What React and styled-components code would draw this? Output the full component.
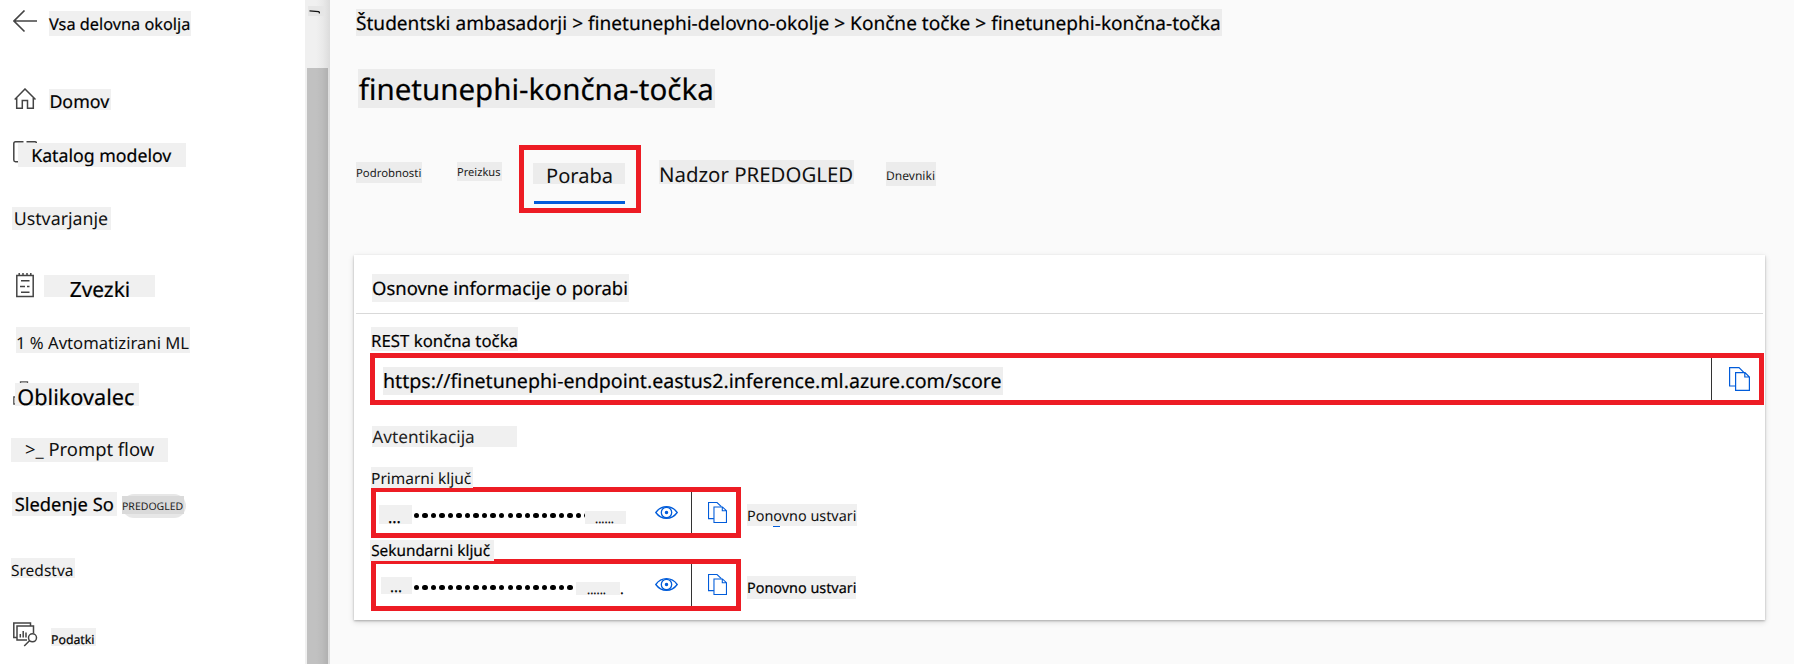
import React from "react";
import styled, { createGlobalStyle } from "styled-components";

const GlobalStyle = createGlobalStyle`
  * { box-sizing: border-box; }
  body {
    margin: 0;
    background: #fafafa;
    color: #000;
    font-family: "Noto Sans", "Open Sans", sans-serif;
    overflow: hidden;
  }
`;

const RED = "#ed1c24";
const BLUE = "#015cda";

const Page = styled.div`
  display: flex;
  width: 1794px;
  height: 664px;
  overflow: hidden;
`;

const Sidebar = styled.nav`
  flex: none;
  width: 305px;
  padding-top: 10px;
  background: #fff;
`;

const NavRow = styled.div`
  display: flex;
  align-items: flex-start;
  height: ${(p) => p.$h}px;
  padding-left: ${(p) => p.$indent}px;
  svg { flex: none; display: block; }
`;

/* The line height is derived so that the text's baseline sits $base px below the chip's top. */
const Chip = styled.span`
  flex: none;
  display: block;
  position: relative;
  width: ${(p) => p.$w}px;
  height: ${(p) => p.$h}px;
  margin: ${(p) => p.$top || 0}px 0 ${(p) => p.$bottom || 0}px ${(p) => p.$left || 0}px;
  padding-left: ${(p) => p.$pad || 0}px;
  background: ${(p) => p.$bg || "#f0f0f0"};
  color: ${(p) => p.$color || "#000"};
  font-size: ${(p) => p.$size}px;
  font-weight: 400;
  -webkit-text-stroke: ${(p) => (p.$color ? 0 : 0.2)}px;
  line-height: ${(p) => 2 * (p.$base + 1 - 0.388 * p.$size)}px;
  text-rendering: geometricPrecision;
  white-space: nowrap;
`;

const PreviewPill = styled.span`
  width: 64px;
  height: 24px;
  margin: 2px 0 0 5px;
  padding-top: 2px;
  border-radius: 12px;
  background: #e7e7e7;
`;

const ScrollTrack = styled.div`
  flex: none;
  width: 25px;
  padding: 6px 2px 0;
  background: linear-gradient(90deg, #f0f0f0 0 11px, #e9e9e9 18px, #dcdcdc 25px);
`;

const ScrollMark = styled.div`
  width: 16px;
  height: 10px;
  margin-left: 1px;
  background: #e6e6e6;
  svg { display: block; }
`;

const ScrollThumb = styled.div`
  width: 21px;
  height: 596px;
  margin-top: 52px;
  background: linear-gradient(90deg, #c1c1c1 0 9px, #bcbcbc 15px, #b0b0b0 21px);
`;

const Main = styled.main`
  flex: none;
  width: 1464px;
  padding: 9px 0 0 26px;
`;

const Title = styled.h1`
  height: 76px;
  margin: 33px 0 0 2px;
`;

const Tabs = styled.div`
  display: flex;
  align-items: flex-start;
  height: 110px;
`;

const ActiveTab = styled.div`
  width: 122px;
  height: 68px;
  margin-left: 17px;
  padding: 13px 9px 0;
  border: 5px solid ${RED};
`;

const TabUnderline = styled.div`
  width: 91px;
  height: 3px;
  margin: 17px 0 0 1px;
  background: ${BLUE};
`;

const Card = styled.section`
  width: 1411px;
  height: 365px;
  margin-left: -2px;
  background: #fff;
  box-shadow: 0 1px 2px rgba(0, 0, 0, 0.25), 0 2px 6px rgba(0, 0, 0, 0.14);
`;

const CardHeader = styled.header`
  height: 59px;
  margin: 0 2px;
  padding: 19px 0 0 16px;
  border-bottom: 1px solid #d9d9d9;
`;

const CardBody = styled.div`
  padding-left: 16px;
`;

const FieldRow = styled.div`
  display: flex;
  align-items: flex-start;
`;

const Field = styled.div`
  display: flex;
  flex: none;
  width: ${(p) => p.$w}px;
  height: ${(p) => p.$h}px;
  margin-left: ${(p) => p.$left || 0}px;
  border: 5px solid ${RED};
  background: #fff;
  svg { display: block; flex: none; }
`;

const FieldValue = styled.div`
  display: flex;
  align-items: flex-start;
  width: ${(p) => p.$w}px;
  overflow: hidden;
`;

const CopyButton = styled.div`
  flex: 1;
  border-left: 1px solid #333;
  padding: ${(p) => p.$pad};
`;

const Dots = styled.div`
  display: flex;
  flex: none;
  gap: 3.06px;
  width: ${(p) => p.$w}px;
  margin: ${(p) => p.$top}px 0 0 1.5px;
  overflow: hidden;
  i {
    flex: none;
    width: 5.5px;
    height: 5.5px;
    border-radius: 50%;
    background: #000;
  }
`;

const EyeSlot = styled.div`
  margin: ${(p) => p.$top}px 0 0 ${(p) => p.$left}px;
`;

const LinkTail = styled.div`
  width: 7px;
  height: 1px;
  margin-left: 32px;
  background: ${BLUE};
`;

const ArrowIcon = () => (
  <svg width="25" height="23" fill="none" stroke="#444" strokeWidth="1.6">
    <path d="M24 11H1M11.5.5 1 11l10.5 10.5" />
  </svg>
);

const HomeIcon = () => (
  <svg width="23" height="22" fill="none" stroke="#444" strokeWidth="1.5">
    <path d="M.7 11.5 11 1l10.5 10.5M2.7 10v10.2h5.6v-7.7h5.2v7.7h5.8V10" />
  </svg>
);

const CatalogIcon = () => (
  <svg width="24" height="22" fill="none" stroke="#444" strokeWidth="1.5">
    <path d="M10.5.8H2.5Q.8.8.8 2.5v16.5q0 1.700 1.700 1.700h8M13.500.8h8.500q1.500 0 1.500 1.500" />
  </svg>
);

const NotebookIcon = () => (
  <svg width="18" height="25" fill="none" stroke="#444" strokeWidth="1.5">
    <path d="M.8 2.500h16.400v21H.8zM3.200 0v3M7 0v3M11 0v3M14.800 0v3M5 7.700h8.500M4 13.500h5m2 0h2.500M5 19.300h8.500" />
  </svg>
);

const DesignerIcon = () => (
  <svg width="16" height="24" fill="none" stroke="#555" strokeWidth="1.3">
    <path d="M7.500 2.500V.8H14.500V2.500M2.500 16H.8v7H2.500" />
  </svg>
);

const DataIcon = () => (
  <svg width="25" height="25" fill="none" stroke="#444" strokeWidth="1.5">
    <path d="M4 15.500H.8V1h16.700v3M14 18H4V4h16.500v7M7.300 15.500v-3.500M10.200 15.500V9M13 15.500v-5M11.200 24l5.500-5.500" />
    <circle cx="19.5" cy="15.8" r="4" />
  </svg>
);

const TrackGlyph = () => (
  <svg width="16" height="10" fill="none" stroke="#111" strokeWidth="1.3">
    <path d="M1.500 4.800 10.500 5.600Q12 6 11 7.300" />
  </svg>
);

const CopyIcon = ({ width = 21, height = 24 }) => (
  <svg
    width={width}
    height={height}
    viewBox="0 0 21 24"
    preserveAspectRatio="none"
    fill="none"
    stroke={BLUE}
    strokeWidth="1.2"
  >
    <path d="M6.500 19H.6V.6H10l4.800 4.800" />
    <path d="M6.600 5.600h9.400l4.400 4.400v13.400H6.600zM15.800 5.600V10h4.600" />
  </svg>
);

const EyeIcon = () => (
  <svg width="23" height="13" fill="none" stroke={BLUE} strokeWidth="1.3">
    <path d="M.8 6.500C3.500 2.700 7 .7 11.500.7S19.500 2.700 22.200 6.500C19.500 10.300 16 12.300 11.500 12.300S3.500 10.300.8 6.500z" />
    <circle cx="11.5" cy="6.5" r="5.2" />
    <circle cx="11.5" cy="6.5" r="1.1" fill={BLUE} />
  </svg>
);

const dots = (n) => Array.from({ length: n }, (_, i) => <i key={i} />);

export default function App() {
  return (
    <Page>
      <GlobalStyle />
      <Sidebar>
        <NavRow $h={78} $indent={13}>
          <ArrowIcon />
          <Chip $w={142} $h={25} $left={11} $top={1} $size={16.3} $base={18.5}>Vsa delovna okolja</Chip>
        </NavRow>
        <NavRow $h={53} $indent={14}>
          <HomeIcon />
          <Chip $w={62} $h={21} $left={12} $top={1} $size={17.8} $base={19.5} $pad={0.4}>Domov</Chip>
        </NavRow>
        <NavRow $h={66} $indent={13}>
          <CatalogIcon />
          <Chip $w={168} $h={24} $left={-19} $top={2} $size={17.73} $base={19.3} $pad={13.2}>Katalog modelov</Chip>
        </NavRow>
        <NavRow $h={66} $indent={12}>
          <Chip $w={99} $h={23} $size={17.8} $base={18.8} $pad={1.7} $color="#111">Ustvarjanje</Chip>
        </NavRow>
        <NavRow $h={54} $indent={16}>
          <NotebookIcon />
          <Chip $w={111} $h={22} $left={10} $top={2} $size={20.9} $base={22.5} $pad={25.7}>Zvezki</Chip>
        </NavRow>
        <NavRow $h={54} $indent={16}>
          <Chip $w={174} $h={26} $size={16.65} $base={21.5} $color="#111">1 % Avtomatizirani ML</Chip>
        </NavRow>
        <NavRow $h={57} $indent={13}>
          <DesignerIcon />
          <Chip $w={124} $h={23} $left={-14} $top={2} $size={21.7} $base={22.6} $pad={2.3}>Oblikovalec</Chip>
        </NavRow>
        <NavRow $h={54} $indent={11}>
          <Chip $w={157} $h={24} $size={18.4} $base={18.3} $pad={14} $color="#111">&gt;_ Prompt flow</Chip>
        </NavRow>
        <NavRow $h={66} $indent={12}>
          <Chip $w={105} $h={24} $size={18.35} $base={19} $pad={2.7}>Sledenje So</Chip>
          <PreviewPill>
            <Chip $w={62} $h={18} $size={10.5} $base={14.5} $bg="#dadada" $color="#222">PREDOGLED</Chip>
          </PreviewPill>
        </NavRow>
        <NavRow $h={64} $indent={11}>
          <Chip $w={64} $h={20} $size={15.5} $base={17.7} $color="#111">Sredstva</Chip>
        </NavRow>
        <NavRow $h={32} $indent={13}>
          <DataIcon />
          <Chip $w={45} $h={18} $left={13} $top={6} $size={12.3} $base={15.4}>Podatki</Chip>
        </NavRow>
      </Sidebar>

      <ScrollTrack>
        <ScrollMark><TrackGlyph /></ScrollMark>
        <ScrollThumb />
      </ScrollTrack>

      <Main>
        <Chip $w={866} $h={27} $size={19.07} $base={21} $bg="#ececec">
          Študentski ambasadorji &gt; finetunephi-delovno-okolje &gt; Končne točke &gt; finetunephi-končna-točka
        </Chip>
        <Title>
          <Chip $w={357} $h={39} $size={29.5} $base={30} $pad={0.7} $bg="#ececec">finetunephi-končna-točka</Chip>
        </Title>
        <Tabs>
          <Chip $w={66} $h={21} $top={17} $size={11.35} $base={15} $bg="#ececec" $color="#222">Podrobnosti</Chip>
          <Chip $w={45} $h={19} $left={35} $top={17} $size={11.1} $base={14.8} $bg="#ececec" $color="#222">Preizkus</Chip>
          <ActiveTab>
            <Chip $w={92} $h={21} $size={20.1} $base={20} $pad={13} $bg="#ececec" $color="#111">Poraba</Chip>
            <TabUnderline />
          </ActiveTab>
          <Chip $w={195} $h={24} $left={18} $top={15} $size={20.42} $base={21.3} $bg="#ececec" $color="#111">Nadzor PREDOGLED</Chip>
          <Chip $w={50} $h={24} $left={32} $top={17} $size={12.05} $base={18} $bg="#ececec" $color="#222">Dnevniki</Chip>
        </Tabs>

        <Card>
          <CardHeader>
            <Chip $w={257} $h={28} $size={18.45} $base={21}>Osnovne informacije o porabi</Chip>
          </CardHeader>
          <CardBody>
            <Chip $w={147} $h={24} $left={1} $top={13} $bottom={2} $size={16.8} $base={20}>REST končna točka</Chip>
            <FieldRow>
              <Field $w={1394} $h={52}>
                <FieldValue $w={1336}>
                  <Chip $w={620} $h={28} $left={8} $top={9} $size={19.62} $base={21} $bg="#eeeeee">
                    https://finetunephi-endpoint.eastus2.inference.ml.azure.com/score
                  </Chip>
                </FieldValue>
                <CopyButton $pad="9px 0 0 17px"><CopyIcon /></CopyButton>
              </Field>
            </FieldRow>
            <Chip $w={145} $h={21} $left={2} $top={21} $size={17.2} $base={18} $pad={0.3} $color="#222">Avtentikacija</Chip>
            <Chip $w={102} $h={21} $left={1} $top={20} $bottom={-1} $size={15.5} $base={16.5} $color="#111">Primarni ključ</Chip>
            <FieldRow>
              <Field $w={370} $h={51} $left={1}>
                <FieldValue $w={315}>
                  <Chip $w={33} $h={19} $left={3} $top={13} $size={16} $base={18} $pad={9}>...</Chip>
                  <Dots $w={172} $top={20.7}>{dots(21)}</Dots>
                  <Chip $w={41} $h={13} $left={-0.5} $top={19} $size={11.8} $base={12} $pad={10}>......</Chip>
                  <EyeSlot $left={29} $top={14}><EyeIcon /></EyeSlot>
                </FieldValue>
                <CopyButton $pad="10px 0 0 16px"><CopyIcon width={19} height={21} /></CopyButton>
              </Field>
              <div>
                <Chip $w={110} $h={22} $left={6} $top={17} $size={14.4} $base={18} $color="#111">Ponovno ustvari</Chip>
                <LinkTail />
              </div>
            </FieldRow>
            <Chip $w={124} $h={21} $top={2} $bottom={-2} $size={15.35} $base={16} $pad={1.2}>Sekundarni ključ</Chip>
            <FieldRow>
              <Field $w={370} $h={52} $left={1}>
                <FieldValue $w={315}>
                  <Chip $w={31} $h={17} $left={5} $top={13} $size={15} $base={15.7} $pad={9}>...</Chip>
                  <Dots $w={163} $top={20.7}>{dots(20)}</Dots>
                  <Chip $w={44} $h={13} $left={-0.5} $top={18} $size={11.8} $base={12} $pad={11}>......</Chip>
                  <Chip $w={5} $h={10} $top={22} $size={14} $base={8} $bg="transparent">.</Chip>
                  <EyeSlot $left={30} $top={14}><EyeIcon /></EyeSlot>
                </FieldValue>
                <CopyButton $pad="10px 0 0 16px"><CopyIcon width={19} height={21} /></CopyButton>
              </Field>
              <Chip $w={109} $h={23} $left={6} $top={17} $size={14.4} $base={18}>Ponovno ustvari</Chip>
            </FieldRow>
          </CardBody>
        </Card>
      </Main>
    </Page>
  );
}
